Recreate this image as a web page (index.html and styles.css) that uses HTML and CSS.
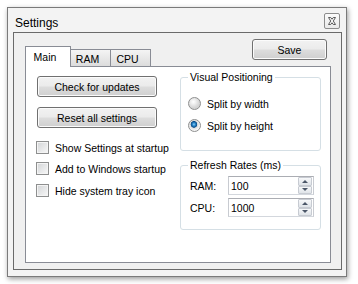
FILE: index.html
```html
<!DOCTYPE html>
<html>
<head>
<meta charset="utf-8">
<title>Settings</title>
<link rel="stylesheet" href="styles.css">
</head>
<body>
<div class="window">
  <div class="titlebar">
    <span class="title">Settings</span>
    <span class="close">
      <svg width="14" height="14" viewBox="0 0 14 14">
        <polygon points="3.5,3.5 5.7,3.5 7,5.2 8.3,3.5 10.5,3.5 8.3,7 10.5,10.5 8.3,10.5 7,8.8 5.7,10.5 3.5,10.5 5.7,7" fill="#f4f4f4" stroke="#5a5a5a" stroke-width="1" stroke-linejoin="round"/>
      </svg>
    </span>
  </div>
  <div class="client">
    <div class="tabbar">
      <div class="tab selected">Main</div>
      <div class="tab">RAM</div>
      <div class="tab">CPU</div>
      <button class="btn save">Save</button>
    </div>
    <div class="panel">
      <div class="col-left">
        <button class="btn wide">Check for updates</button>
        <button class="btn wide second">Reset all settings</button>
        <div class="check c1"><span class="box"></span>Show Settings at startup</div>
        <div class="check c2"><span class="box"></span>Add to Windows startup</div>
        <div class="check c3"><span class="box"></span>Hide system tray icon</div>
      </div>
      <div class="col-right">
        <div class="group vp">
          <div class="group-title">Visual Positioning</div>
          <div class="radio r1"><span class="dot"></span>Split by width</div>
          <div class="radio r2 on"><span class="dot"></span>Split by height</div>
        </div>
        <div class="group rr">
          <div class="group-title">Refresh Rates (ms)</div>
          <div class="field f1">
            <span class="lbl">RAM:</span>
            <div class="spin"><span class="val">100</span><div class="arrows"><span class="arr"><i class="up"></i></span><span class="arr"><i class="down"></i></span></div></div>
          </div>
          <div class="field f2">
            <span class="lbl">CPU:</span>
            <div class="spin"><span class="val">1000</span><div class="arrows"><span class="arr"><i class="up"></i></span><span class="arr"><i class="down"></i></span></div></div>
          </div>
        </div>
      </div>
    </div>
  </div>
</div>
</body>
</html>
```
FILE: styles.css
```css
* { box-sizing: border-box; }
html, body { margin: 0; }
body {
  background: #fff;
  width: 358px;
  height: 284px;
  overflow: hidden;
  padding: 7px 0 0 7px;
  font-family: "Liberation Sans", Arial, sans-serif;
  font-size: 10.5px;
  color: #000;
}
.window {
  width: 340px;
  height: 270px;
  border: 1px solid #7a7a7a;
  background: #f3f3f3;
  box-shadow: 1px 2px 5px rgba(0, 0, 0, 0.4);
  display: flex;
  flex-direction: column;
}
.titlebar {
  height: 24px;
  flex: none;
  display: flex;
  align-items: flex-start;
  padding: 5px 6px 0 7px;
}
.title {
  margin-top: 3px;
  font-size: 12px;
  line-height: 14px;
  color: #000;
}
.close {
  margin-left: auto;
  width: 16px;
  height: 16px;
  border: 1px solid #8c8c8c;
  border-radius: 2px;
  background: linear-gradient(#fbfbfb, #e9e9e9);
  display: flex;
  align-items: center;
  justify-content: center;
}
.close svg { display: block; }
.client {
  flex: 1;
  margin: 0 4px 6px 5px;
  border: 1px solid #6a6a6a;
  background: #f0f0f0;
  padding: 6px 10px 6px 11px;
  display: flex;
  flex-direction: column;
}
.tabbar {
  height: 27px;
  flex: none;
  display: flex;
  align-items: flex-end;
}
.tab {
  height: 17px;
  width: 40px;
  border: 1px solid #898c95;
  border-bottom: none;
  border-left: none;
  background: linear-gradient(#f4f4f4, #dcdcdc);
  display: flex;
  align-items: center;
  justify-content: center;
  padding-right: 6px;
  padding-top: 1px;
}
.tab.selected {
  width: 46px;
  height: 21px;
  border-left: 1px solid #898c95;
  background: #fff;
  margin-bottom: -1px;
  position: relative;
  z-index: 1;
  padding-top: 0;
}
.btn {
  font: inherit;
  color: #000;
  padding: 0;
  border: 1px solid #707070;
  border-radius: 3px;
  background: linear-gradient(#f2f2f2 0%, #ebebeb 48%, #dddddd 52%, #cfcfcf 100%);
  box-shadow: inset 0 0 0 1px #fbfbfb;
}
.save {
  margin-left: auto;
  margin-right: 4px;
  align-self: flex-start;
  width: 75px;
  height: 21px;
}
.panel {
  flex: 1;
  border: 1px solid #898c95;
  background: #fff;
  display: flex;
}
.col-left {
  width: 154px;
  flex: none;
  padding: 9px 0 0 10px;
  display: flex;
  flex-direction: column;
  align-items: flex-start;
}
.wide {
  width: 120px;
  height: 21px;
  margin-left: 1px;
}
.wide.second { margin-top: 10px; }
.check {
  height: 13px;
  display: flex;
  align-items: center;
  white-space: nowrap;
}
.check.c1 { margin-top: 13px; }
.check.c2 { margin-top: 8px; }
.check.c3 { margin-top: 9px; }
.box {
  width: 13px;
  height: 13px;
  flex: none;
  margin-right: 6px;
  border: 1px solid #8e8f8f;
  background: linear-gradient(135deg, #d2d4d6, #f8f8f8);
  box-shadow: inset 0 0 0 1px #f4f4f4;
}
.col-right {
  width: 141px;
  flex: none;
  padding-top: 10px;
  display: flex;
  flex-direction: column;
  gap: 14px;
}
.group {
  border: 1px solid #d5dfe5;
  border-radius: 3px;
  padding-left: 7px;
  display: flex;
  flex-direction: column;
  align-items: flex-start;
}
.group-title {
  margin-top: -7px;
  height: 13px;
  line-height: 13px;
  padding: 0 2px;
  background: #fff;
  white-space: nowrap;
}
.vp { padding-bottom: 18px; }
.rr { padding-bottom: 12px; }
.radio {
  height: 13px;
  display: flex;
  align-items: center;
  white-space: nowrap;
}
.radio.r1 { margin-top: 13px; }
.radio.r2 { margin-top: 9px; }
.dot {
  width: 13px;
  height: 13px;
  flex: none;
  margin-right: 6px;
  border-radius: 50%;
  border: 1px solid #8e8f8f;
  background: radial-gradient(circle at 40% 35%, #ffffff 0, #f2f2f2 2px, #d4d4d4 6px);
}
.radio.on .dot {
  background: radial-gradient(circle at 45% 40%, #8fd2f8 0, #2a88cc 1.5px, #0b4b86 3px, #dcdcdc 3.6px, #f6f6f6 6px);
}
.field {
  display: flex;
  align-items: center;
}
.field.f1 { margin-top: 4px; }
.field.f2 { margin-top: 3px; }
.lbl {
  width: 40px;
  padding-left: 2px;
}
.spin {
  width: 86px;
  height: 19px;
  border: 1px solid #abadb3;
  border-color: #abadb3 #c8cbd1 #d3d7dd #c8cbd1;
  display: flex;
  align-items: center;
  background: #fff;
}
.val {
  padding-left: 2px;
}
.arrows {
  margin-left: auto;
  margin-right: 1px;
  width: 14px;
  height: 17px;
  display: flex;
  flex-direction: column;
}
.arr {
  flex: 1;
  border: 1px solid #c7cbd2;
  border-radius: 1px;
  background: linear-gradient(#f7f8fa, #dfe3e8);
  display: flex;
  align-items: center;
  justify-content: center;
}
.up {
  width: 0;
  height: 0;
  border-left: 3px solid transparent;
  border-right: 3px solid transparent;
  border-bottom: 3px solid #4b5668;
}
.down {
  width: 0;
  height: 0;
  border-left: 3px solid transparent;
  border-right: 3px solid transparent;
  border-top: 3px solid #4b5668;
}
```
